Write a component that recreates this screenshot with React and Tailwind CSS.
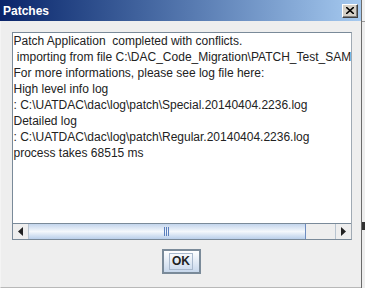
import React from 'react';

const lines = [
  'Patch Application  completed with conflicts.',
  ' importing from file C:\\DAC_Code_Migration\\PATCH_Test_SAMPLE\\patch.zip',
  'For more informations, please see log file here:',
  'High level info log',
  ': C:\\UATDAC\\dac\\log\\patch\\Special.20140404.2236.log',
  'Detailed log',
  ': C:\\UATDAC\\dac\\log\\patch\\Regular.20140404.2236.log',
  'process takes 68515 ms',
];

// small triangle for the scroll buttons
const Arrow = ({ dir }) => (
  <svg width="5" height="9" viewBox="0 0 5 9">
    {dir === 'left' ? <path d="M5 0 L0 4.5 L5 9 Z" fill="#222" /> : <path d="M0 0 L5 4.5 L0 9 Z" fill="#222" />}
  </svg>
);

const App = () => {
  return (
    <div className="w-[365px] h-[288px] flex bg-[#d4d0c8] overflow-hidden" style={{ fontFamily: '"Liberation Sans", Arial, sans-serif' }}>
      {/* Dialog window */}
      <div className="w-[362px] h-[288px] flex flex-col border-r border-[#6b6b6b]">
        {/* Title bar */}
        <div className="h-[21px] flex items-center justify-between pl-[3px] pr-[3px] bg-gradient-to-r from-[#0a246a] to-[#a6caf0]">
          <span className="text-white font-bold text-[12px] leading-none">Patches</span>
          <button className="w-[16px] h-[14px] bg-[#d4d0c8] flex items-center justify-center border-t border-l border-white border-r border-b border-r-[#404040] border-b-[#404040] shadow-[inset_-1px_-1px_0_#808080]">
            <svg width="8" height="7" viewBox="0 0 8 7">
              <path d="M0 0 L8 7 M8 0 L0 7" stroke="#000" strokeWidth="1.6" />
            </svg>
          </button>
        </div>

        {/* Body */}
        <div className="flex-1 flex flex-col items-center bg-[#eeeeee] border-l border-[#f4f4f4] border-b border-b-[#b8b8b8] pt-[11px]">
          {/* Text area with horizontal scrollbar */}
          <div className="ml-[1px] w-[340px] h-[208px] flex flex-col bg-white border border-[#7a8a99] border-r-[#a0aab4]">
            <div className="flex-1 overflow-hidden pl-[1px] pt-0">
              {lines.map((l, i) => (
                <div key={i} className="h-[16px] leading-[16px] text-[12px] text-[#222] whitespace-pre">
                  {l}
                </div>
              ))}
            </div>
            <div className="h-[16px] flex border-t border-[#7a8a99] bg-[#eeeeee]">
              <div className="w-[16px] flex items-center justify-center border-r border-[#b8c4d0]">
                <Arrow dir="left" />
              </div>
              <div className="w-[277px] relative border-r border-[#6d8cc0] bg-gradient-to-b from-[#c3d5ec] via-[#f4f8fc] to-[#b9cfea]">
                <div className="absolute left-[135px] top-[3px] flex gap-[1px]">
                  <div className="w-[1px] h-[9px] bg-[#5b7fbd]" />
                  <div className="w-[1px] h-[9px] bg-[#5b7fbd]" />
                  <div className="w-[1px] h-[9px] bg-[#5b7fbd]" />
                </div>
              </div>
              <div className="flex-1" />
              <div className="w-[16px] flex items-center justify-center border-l border-[#b8c4d0]">
                <Arrow dir="right" />
              </div>
            </div>
          </div>

          {/* OK button */}
          <button className="mt-[9px] w-[39px] h-[25px] flex items-center justify-center border-2 border-[#7a8a99] bg-gradient-to-b from-white to-[#c8d8ec]">
            <span className="px-[2px] border border-[#a8b8cc] text-[12px] font-bold leading-[15px] text-[#222]">OK</span>
          </button>
        </div>
      </div>

      {/* sliver of whatever is behind the dialog */}
      <div className="flex-1 flex flex-col bg-[#eeeeee]">
        <div className="h-[21px] bg-[#f0f0f0]" />
        <div className="h-[1px] bg-[#9a9a9a]" />
        <div className="h-[200px]" />
        <div className="h-[8px] bg-[#333]" />
        <div className="flex-1" />
      </div>
    </div>
  );
};

export default App;
